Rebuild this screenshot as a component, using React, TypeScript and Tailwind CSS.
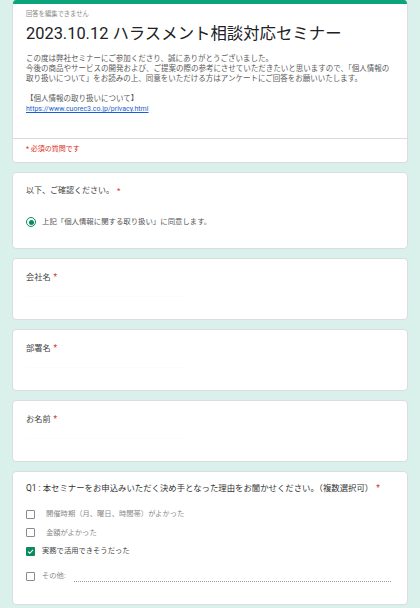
import { ReactNode } from "react";

const font = { fontFamily: 'Roboto, "Noto Sans CJK JP", sans-serif' };

const Req = () => <span className="ml-[3px] text-[#d93025]">*</span>;

const Card = ({ children, className = "" }: { children: ReactNode; className?: string }) => (
	<div className={`rounded-[4px] border border-[#dadce0] bg-white px-[13px] ${className}`}>{children}</div>
);

const TextQuestion = ({ label }: { label: string }) => (
	<Card className="h-[62px] pt-[13px]">
		<div className="h-[10px] text-[8.2px] leading-[10px] text-[#444]">
			{label}
			<Req />
		</div>
		<div className="mt-[14px] h-px w-[160px] bg-[#fcfcfc]" />
	</Card>
);

const Checkbox = ({ checked }: { checked?: boolean }) =>
	checked ? (
		<span className="flex h-[9px] w-[9px] shrink-0 items-center justify-center rounded-[1px] bg-[#0b8a5f]">
			<svg viewBox="0 0 10 10" className="h-[7px] w-[7px]">
				<path d="M1.5 5.2 L4 7.5 L8.6 2.6" fill="none" stroke="white" strokeWidth="1.5" />
			</svg>
		</span>
	) : (
		<span className="h-[9px] w-[9px] shrink-0 rounded-[1px] border border-[#8a8a8a]" />
	);

const App = () => {
	const options = [
		{ text: "開催時期（月、曜日、時間帯）がよかった", gap: "ml-[11px]" },
		{ text: "金額がよかった", gap: "ml-[11px]" },
		{ text: "実務で活用できそうだった", gap: "ml-[7px]", checked: true },
	];

	return (
		<div className="min-h-[608px] bg-[#d9f0eb] px-[12px] pb-[8px]" style={font}>
			<div className="flex flex-col gap-[9px]">
				{/* header */}
				<div className="overflow-hidden rounded-[4px] border border-t-0 border-[#dadce0] bg-white">
					<div className="h-[4px] bg-[#0ba47b]" />
					<div className="px-[13px] pt-[6px]">
						<div className="h-[8px] text-[6.3px] leading-[8px] text-[#8a8a8a]">回答を編集できません</div>
						<h1 className="mt-[6px] h-[20px] whitespace-nowrap text-[16.4px] leading-[20px] text-[#202124]">
							2023.10.12 ハラスメント相談対応セミナー
						</h1>
						<div className="mt-[10px] whitespace-nowrap text-[7.5px] leading-[10px] text-[#5a5a5a]">
							<div>この度は弊社セミナーにご参加くださり、誠にありがとうございました。</div>
							<div>今後の商品やサービスの開発および、ご提案の際の参考にさせていただきたいと思いますので、「個人情報の</div>
							<div>取り扱いについて」をお読みの上、同意をいただける方はアンケートにご回答をお願いいたします。</div>
							<div className="h-[10px]" />
							<div>【個人情報の取り扱いについて】</div>
							<a href="#" className="block w-fit text-[7px] text-[#1a5fd0] underline">
								https://www.cuorec3.co.jp/privacy.html
							</a>
						</div>
					</div>
					<div className="mt-[24px] border-t border-[#dadce0] px-[13px] pb-[8px] pt-[5px]">
						<div className="h-[10px] text-[7px] leading-[10px] text-[#d93025]">* 必須の質問です</div>
					</div>
				</div>

				{/* agreement */}
				<Card className="h-[77px] pt-[13px]">
					<div className="h-[10px] text-[8px] leading-[10px] text-[#444]">
						以下、ご確認ください。
						<Req />
					</div>
					<div className="mt-[21px] flex h-[10px] items-center">
						<span className="flex h-[10px] w-[10px] items-center justify-center rounded-full border-[1.5px] border-[#0b8a5f]">
							<span className="h-[5px] w-[5px] rounded-full bg-[#0b8a5f]" />
						</span>
						<span className="ml-[6px] text-[7.4px] leading-[10px] text-[#555]">
							上記「個人情報に関する取り扱い」に同意します。
						</span>
					</div>
				</Card>

				<TextQuestion label="会社名" />
				<TextQuestion label="部署名" />
				<TextQuestion label="お名前" />

				{/* Q1 */}
				<Card className="h-[134px] pt-[11px]">
					<div className="h-[10px] whitespace-nowrap text-[8.4px] leading-[10px] text-[#333]">
						Q1 : 本セミナーをお申込みいただく決め手となった理由をお聞かせください。（複数選択可）
						<Req />
					</div>
					<div className="mt-[16px] flex flex-col gap-[8.5px]">
						{options.map((o) => (
							<div key={o.text} className="flex h-[10px] items-center">
								<Checkbox checked={o.checked} />
								<span
									className={`${o.gap} text-[7.3px] leading-[10px] ${o.checked ? "text-[#444]" : "text-[#8a8a8a]"}`}>
									{o.text}
								</span>
							</div>
						))}
					</div>
					<div className="mt-[15px] flex h-[10px] items-center">
						<Checkbox />
						<span className="ml-[7px] text-[7.3px] leading-[10px] text-[#8a8a8a]">その他:</span>
						<div className="ml-[8px] mr-[3px] mt-[11px] h-0 flex-1 border-b border-dotted border-[#9a9a9a]" />
					</div>
				</Card>
			</div>
		</div>
	);
};

export default App;
